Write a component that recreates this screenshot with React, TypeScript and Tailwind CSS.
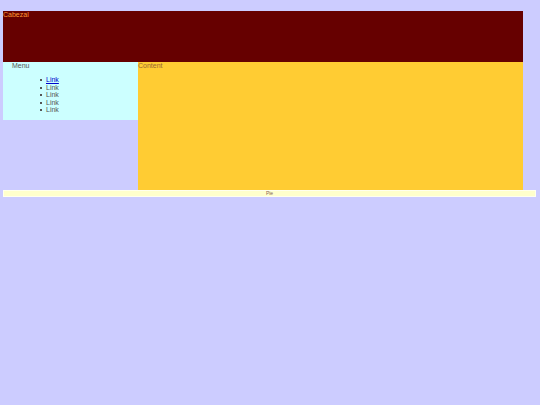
export default function App() {
  const links = ['Link', 'Link', 'Link', 'Link', 'Link'];

  return (
    <div
      className="min-h-[405px] w-[540px] bg-[#ccccff] pt-[11px] pl-[3px] text-[7px] leading-[8px]"
      style={{ fontFamily: '"Liberation Sans", Arial, sans-serif' }}
    >
      {/* Header */}
      <div className="h-[51px] w-[520px] bg-[#660000] text-[#ff9933]">Cabezal</div>

      {/* Body */}
      <div className="flex w-[520px] items-start">
        <div className="h-[58px] w-[135px] bg-[#ccffff] pl-[9px] text-[#555555]">
          <div className="h-[8px]">Menu</div>
          <ul className="mt-[6px] pl-[34px]">
            {links.map((l, i) => (
              <li
                key={i}
                className="relative h-[7.5px] leading-[7.5px] before:absolute before:top-[3px] before:left-[-6px] before:h-[2px] before:w-[2px] before:bg-[#555555] before:content-['']"
              >
                {i === 0 ? (
                  <a href="#" className="text-[#0000cc] underline">
                    {l}
                  </a>
                ) : (
                  l
                )}
              </li>
            ))}
          </ul>
        </div>
        <div className="h-[128px] flex-1 bg-[#ffcc33] text-[#996633]">Content</div>
      </div>

      {/* Footer */}
      <div className="flex h-[7px] w-[533px] items-center justify-center border border-[#ffffee] bg-[#ffffcc] text-[5px] leading-[5px] text-[#886655]">
        Pie
      </div>
    </div>
  );
}
